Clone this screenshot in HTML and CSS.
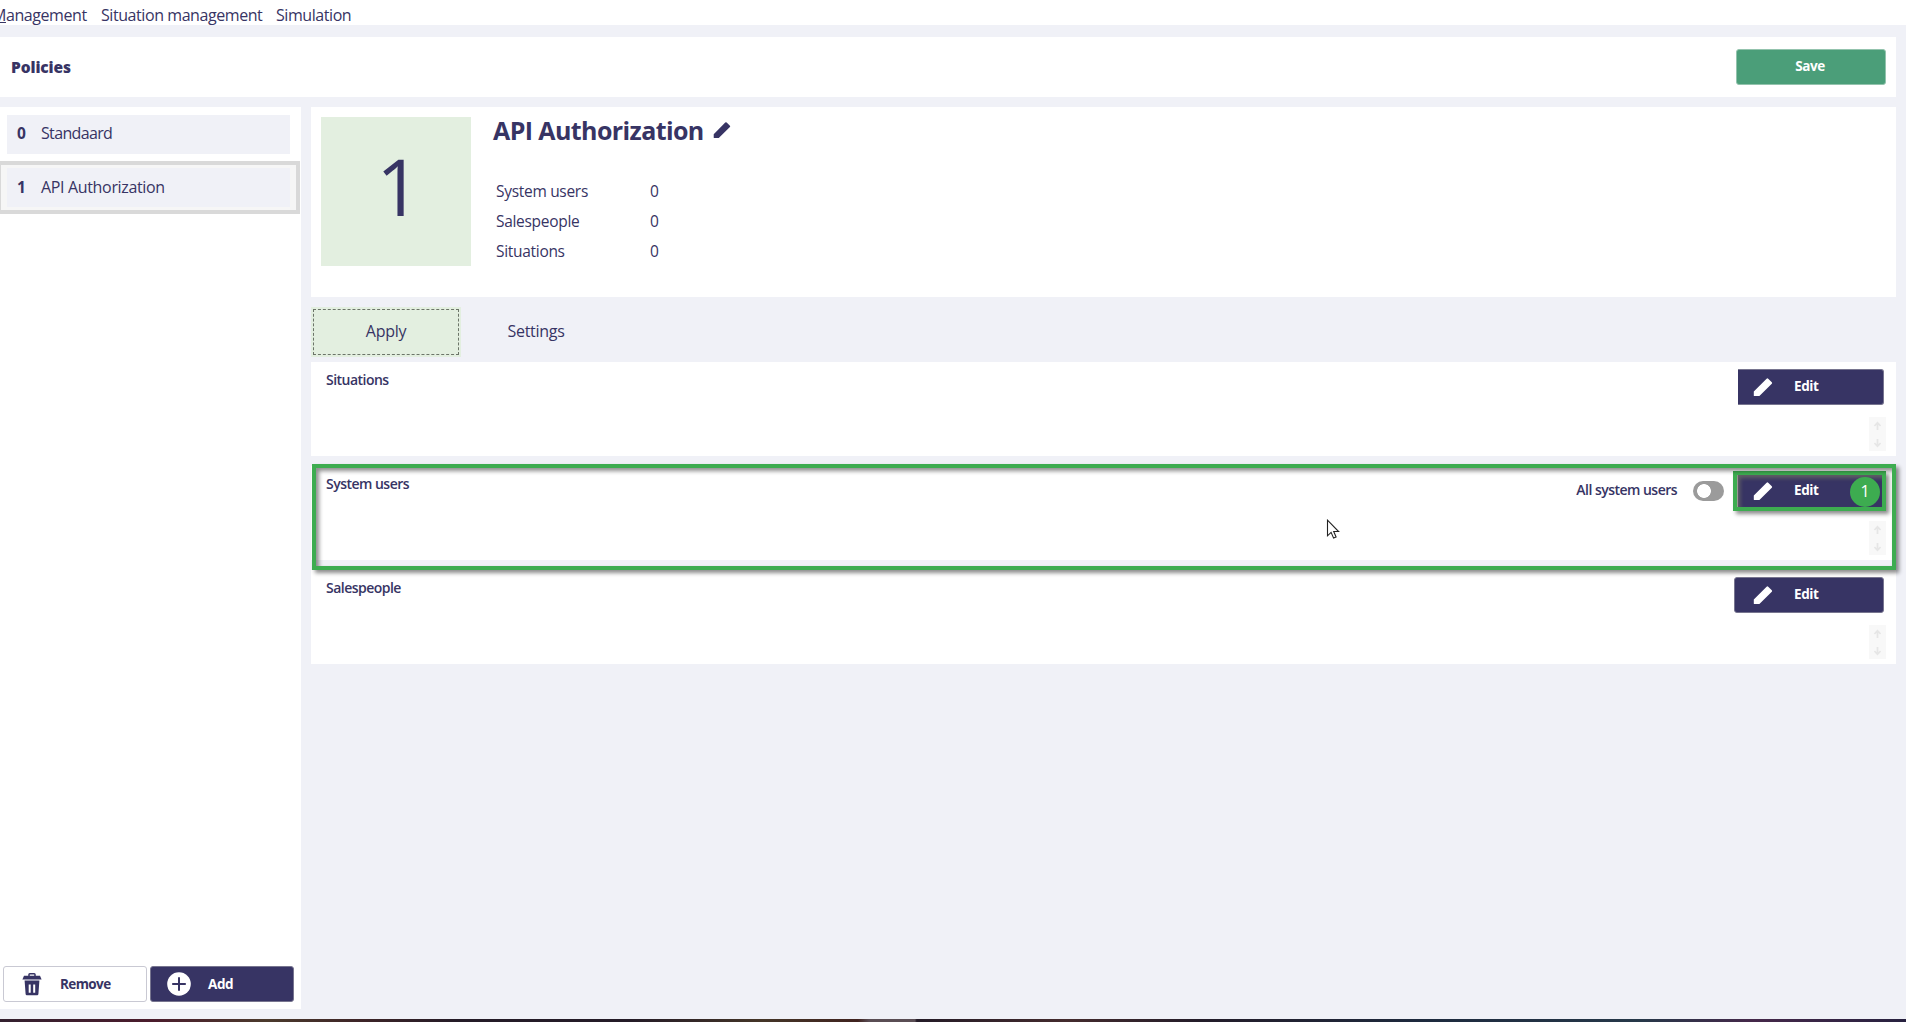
FILE: index.html
```html
<!DOCTYPE html>
<html lang="en">
<head>
<meta charset="utf-8">
<title>Policies</title>
<link rel="stylesheet" href="styles.css">
</head>
<body>
<svg class="defs" aria-hidden="true">
  <symbol id="pencil" viewBox="0 0 20 20"><path d="M.8 14.600 13.600 1.700Q14.400.9 15.200 1.700L18.800 5.200Q19.500 6 18.800 6.800L6.400 19H1.400Q.8 19 .8 18.400z"/></symbol>
  <symbol id="arrows" viewBox="0 0 17 34"><path d="M8.5 13V6M5.4 9 8.5 5.8 11.6 9M8.5 22v7M5.4 26 8.5 29.2 11.6 26" fill="none" stroke="#e6e6e6" stroke-width="1.7"/></symbol>
</svg>
<nav class="menu">
  <a class="m1"><u>M</u>anagement</a>
  <a class="m2">Situation management</a>
  <a class="m3">Simulation</a>
</nav>
<header class="header">
  <h1>Policies</h1>
  <button class="btn save">Save</button>
</header>
<div class="body">
  <aside class="sidebar">
    <ul class="list">
      <li class="item"><div class="row first"><b>0</b><span>Standaard</span></div></li>
      <li class="item selected"><div class="row"><b>1</b><span>API Authorization</span></div></li>
    </ul>
    <div class="actions">
      <button class="btn remove">
        <svg width="20" height="23" viewBox="0 0 20 23"><path d="M7 3V1.6Q7 .8 7.8.8h4.4q.8 0 .8.8V3" fill="none" stroke="#373464" stroke-width="1.5"/><path d="M2 2.8h16l1.6 3.7H.4zM2.6 7.6h14.8L16.4 21q-.1 1.2-1.3 1.2H4.9Q3.7 22.200 3.600 21z" fill="#373464"/><path d="M7.700 11.500v8.200M12.200 11.500v8.200" stroke="#fff" stroke-width="2"/></svg>
        <span>Remove</span>
      </button>
      <button class="btn add">
        <svg width="24" height="24" viewBox="0 0 24 24"><circle cx="12" cy="12" r="11.800" fill="#fff"/><path d="M12 5.200v13.600M5.200 12h13.600" stroke="#373464" stroke-width="2"/></svg>
        <span>Add</span>
      </button>
    </div>
  </aside>
  <main class="main">
    <section class="card summary">
      <div class="number">1</div>
      <div class="info">
        <h2><span>API Authorization</span><svg width="18" height="18" fill="#373464"><use href="#pencil"/></svg></h2>
        <dl>
          <dt>System users</dt><dd>0</dd>
          <dt>Salespeople</dt><dd>0</dd>
          <dt>Situations</dt><dd>0</dd>
        </dl>
      </div>
    </section>
    <div class="tabs">
      <button class="tab active">Apply</button>
      <button class="tab">Settings</button>
    </div>
    <div class="sections">
      <section class="card section">
        <h3>Situations</h3>
        <div class="tools">
          <button class="btn edit cut"><svg width="20" height="20" fill="#fff"><use href="#pencil"/></svg><span>Edit</span></button>
        </div>
        <svg class="scroller"><use href="#arrows"/></svg>
      </section>
      <section class="card section">
        <h3>System users</h3>
        <div class="tools">
          <span class="all">All system users</span>
          <span class="toggle"></span>
          <button class="btn edit cut"><svg width="20" height="20" fill="#fff"><use href="#pencil"/></svg><span>Edit</span></button>
        </div>
        <svg class="scroller"><use href="#arrows"/></svg>
        <div class="mark mark-section"></div>
        <div class="mark mark-button"></div>
        <div class="badge">1</div>
        <svg class="cursor" width="14" height="21" viewBox="0 0 14 21"><path d="M1.500 1.200v15.600l3.600-3.400 2.500 5.700 2.500-1.100-2.400-5.500h4.900z" fill="#fff" stroke="#222" stroke-width="1.100"/></svg>
      </section>
      <section class="card section">
        <h3>Salespeople</h3>
        <div class="tools">
          <button class="btn edit"><svg width="20" height="20" fill="#fff"><use href="#pencil"/></svg><span>Edit</span></button>
        </div>
        <svg class="scroller"><use href="#arrows"/></svg>
      </section>
    </div>
  </main>
</div>
<footer class="desktop"></footer>
</body>
</html>
```

FILE: styles.css
```css
* { box-sizing: border-box; margin: 0; padding: 0; }
body {
  width: 1906px; height: 1022px; overflow: hidden;
  display: flex; flex-direction: column;
  background: #f0f1f7; color: #373464;
  font: 16px/22px "Open Sans", "Noto Sans", sans-serif;
}
button { font: inherit; color: inherit; background: none; border: 0; }
.defs { display: none; }
.menu { height: 25px; background: #fff; display: flex; white-space: nowrap; line-height: 30px; letter-spacing: -.43px; }
.menu a { flex: none; }
.m1 { width: 109px; margin-left: -8px; }
.m2 { width: 175px; }
.header {
  height: 60px; width: 1896px; margin-top: 12px; padding: 12px 10px 12px 11px;
  background: #fff; display: flex; justify-content: space-between;
}
.header h1 { font-size: 15.5px; line-height: 36px; font-weight: 800; letter-spacing: -.1px; }
.btn {
  display: flex; align-items: center; height: 36px; border-radius: 3px;
  border: 1px solid #77758f; background: #373464; color: #fff;
  font-size: 13.5px; font-weight: 700; line-height: 20px; letter-spacing: -.4px;
}
.save { width: 150px; height: 36px; justify-content: center; padding-bottom: 3px; padding-right: 2px; background: #4b9e79; border-color: #93c3ad; }
.body { display: flex; gap: 10px; height: 902px; margin-top: 10px; }
.sidebar { width: 301px; background: #fff; display: flex; flex-direction: column; justify-content: space-between; }
.list { list-style: none; padding-top: 4px; }
.item { width: 303px; margin-left: -3px; padding: 4px 10px; }
.item.selected { margin-top: 3px; padding: 3px 6px; border: 4px solid #d9d9d9; background: #f6f6f6; height: 53px; }
.row { height: 39px; width: 283px; background: #f0f1f7; display: flex; align-items: center; padding: 0 0 2px 10px; }
.row.first { padding-bottom: 3px; }
.row b { width: 24px; font-size: 15.5px; }
.row span { letter-spacing: -.34px; }
.row.first span { letter-spacing: -.65px; }
.actions { display: flex; gap: 4px; padding: 0 0 7px 3px; }
.actions .btn { width: 144px; }
.actions .add { padding-left: 16px; gap: 17px; margin-left: -1px; }
.remove { background: #fff; color: #373464; border-color: #c9c9d3; padding-left: 18px; gap: 18px; }
.actions .remove span { letter-spacing: -.6px; }
.actions span, .edit span { position: relative; top: -1px; }
.actions span { top: 0; }
.main { width: 1585px; }
.card { background: #fff; }
.summary { height: 190px; padding: 10px; display: flex; }
.number { width: 150px; height: 149px; background: #e3efe0; font-size: 78px; line-height: 138px; text-align: center; padding-left: 5px; }
.info { padding-left: 22px; }
.info h2 { display: flex; align-items: center; gap: 9px; font-size: 25px; line-height: 28px; letter-spacing: -.6px; }
.info h2 span, .info h2 svg { position: relative; top: -1px; }
.info dl { display: grid; grid-template-columns: 154px 40px; grid-auto-rows: 30px; line-height: 32px; padding: 30px 0 0 3px; font-size: 15.500px; letter-spacing: -.3px; }
.tabs { display: flex; height: 50px; margin-top: 10px; }
.tab { width: 150px; height: 50px; padding-bottom: 2px; letter-spacing: -.3px; }
.active { background: #e3efe0; outline: 1px dashed #6c7569; outline-offset: -3px; }
.sections { margin-top: 5px; display: flex; flex-direction: column; gap: 10px; }
.section {
  position: relative; height: 94px; padding: 7px 10px 5px 15px;
  display: grid; grid-template-columns: 1fr auto; grid-template-rows: 48px 34px;
}
.section h3 { font-size: 14px; line-height: 22px; font-weight: 600; letter-spacing: -.52px; }
.tools { display: flex; height: 36px; align-items: center; padding-right: 2px; }
.edit { width: 150px; height: 36px; padding-left: 18px; gap: 21px; }
.edit.cut { width: 146px; padding-left: 15px; border-left: 0; border-radius: 0 3px 3px 0; }
.all { font-size: 14px; font-weight: 600; margin-right: 16px; letter-spacing: -.52px; position: relative; top: -1px; }
.toggle { width: 31px; height: 20px; border-radius: 10px; background: radial-gradient(circle at 11px 10px, #fff 6.500px, #9b9b9b 7.200px); margin-right: 14px; }
.scroller { grid-column: 2; justify-self: end; width: 17px; height: 34px; background: #f8f8f8; }
.mark { position: absolute; border: 4px solid #3dac50; box-shadow: 3px 3px 4px rgba(0,0,0,.45), inset 3px 3px 4px rgba(0,0,0,.45); }
.mark-section { left: 1px; top: -2px; width: 1584px; height: 106px; z-index: 1; }
.mark-button { left: 1422px; top: 5px; width: 153px; height: 40px; box-shadow: 3px 3px 4px rgba(0,0,0,.45), inset 3px 3px 4px rgba(110,110,100,.8); }
.badge {
  position: absolute; left: 1539px; top: 11px; width: 30px; height: 30px; border-radius: 50%;
  background: #3dac50; color: #fff; font-size: 16px; line-height: 29px; text-align: center;
}
.cursor { position: absolute; left: 1015px; top: 53px; }
.desktop {
  height: 3px; margin-top: 10px;
  background: linear-gradient(90deg, #33202f 0, #4b1c2c 8%, #4b3a2c 14%, #3d2427 19%, #241b27 24%, #241b27 33%, #443527 40%, #40231f 45%, #5a4d54 45.600%, #5a4d54 48%, #241b27 48.100%, #442b2d 56%, #231c29 63%, #1d2a3e 75%, #263849 86%, #45284a 92%, #27213f 100%);
}
```
